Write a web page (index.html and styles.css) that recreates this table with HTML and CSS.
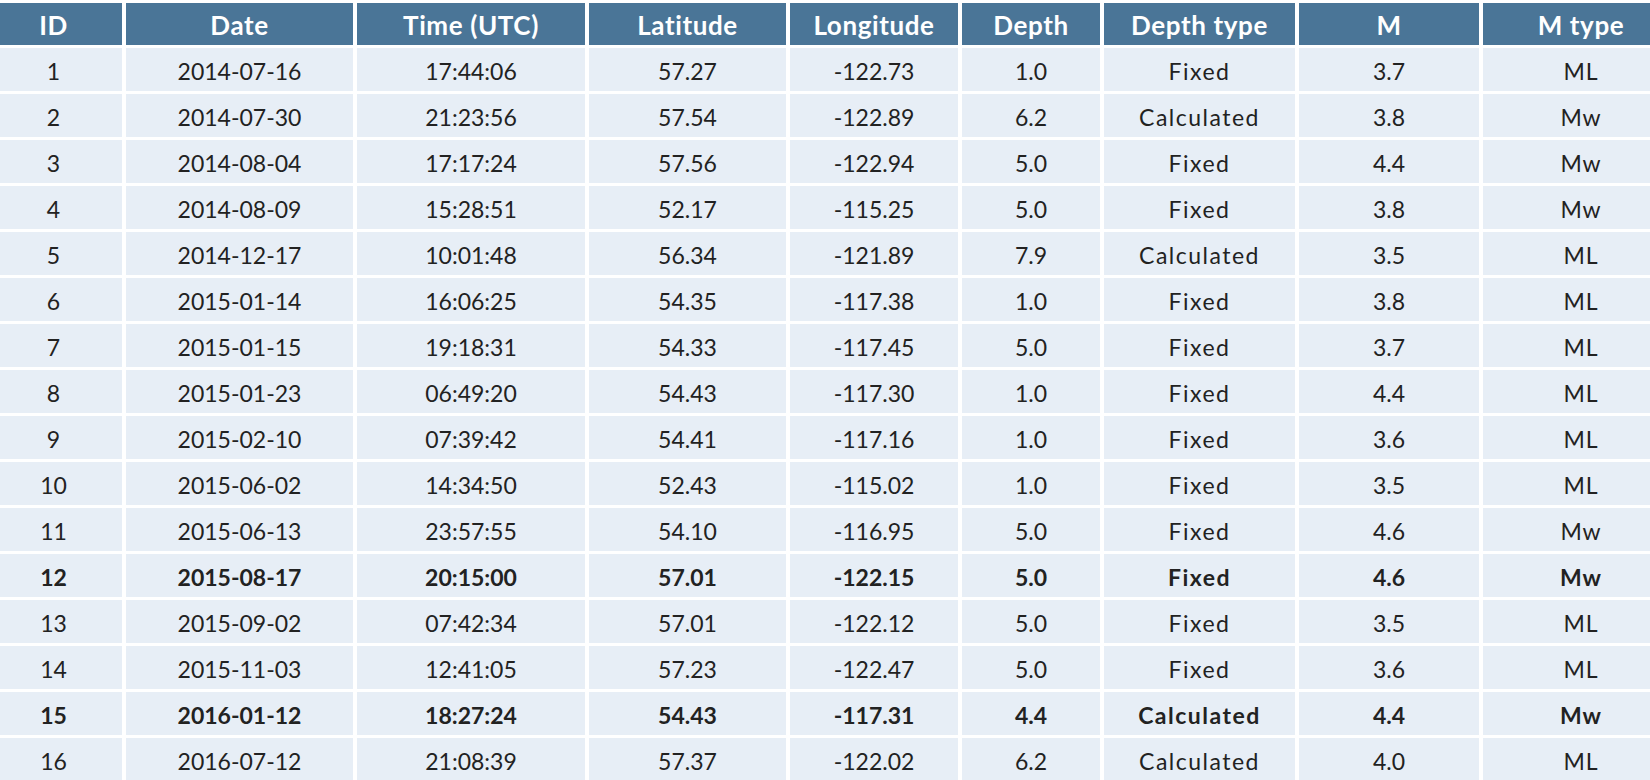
FILE: index.html
```html
<!DOCTYPE html>
<html>
<head>
<meta charset="utf-8">
<link rel="stylesheet" href="styles.css">
</head>
<body>
<table class="quakes">
<colgroup>
<col class="c-id"><col class="c-date"><col class="c-time"><col class="c-lat"><col class="c-lon"><col class="c-depth"><col class="c-dtype"><col class="c-m"><col class="c-mtype">
</colgroup>
<thead>
<tr><th>ID</th><th>Date</th><th>Time (UTC)</th><th>Latitude</th><th>Longitude</th><th>Depth</th><th>Depth type</th><th>M</th><th>M type</th></tr>
</thead>
<tbody>
<tr><td>1</td><td>2014-07-16</td><td>17:44:06</td><td>57.27</td><td>-122.73</td><td>1.0</td><td class="word">Fixed</td><td>3.7</td><td class="mt">ML</td></tr>
<tr><td>2</td><td>2014-07-30</td><td>21:23:56</td><td>57.54</td><td>-122.89</td><td>6.2</td><td class="word">Calculated</td><td>3.8</td><td class="mt">Mw</td></tr>
<tr><td>3</td><td>2014-08-04</td><td>17:17:24</td><td>57.56</td><td>-122.94</td><td>5.0</td><td class="word">Fixed</td><td>4.4</td><td class="mt">Mw</td></tr>
<tr><td>4</td><td>2014-08-09</td><td>15:28:51</td><td>52.17</td><td>-115.25</td><td>5.0</td><td class="word">Fixed</td><td>3.8</td><td class="mt">Mw</td></tr>
<tr><td>5</td><td>2014-12-17</td><td>10:01:48</td><td>56.34</td><td>-121.89</td><td>7.9</td><td class="word">Calculated</td><td>3.5</td><td class="mt">ML</td></tr>
<tr><td>6</td><td>2015-01-14</td><td>16:06:25</td><td>54.35</td><td>-117.38</td><td>1.0</td><td class="word">Fixed</td><td>3.8</td><td class="mt">ML</td></tr>
<tr><td>7</td><td>2015-01-15</td><td>19:18:31</td><td>54.33</td><td>-117.45</td><td>5.0</td><td class="word">Fixed</td><td>3.7</td><td class="mt">ML</td></tr>
<tr><td>8</td><td>2015-01-23</td><td>06:49:20</td><td>54.43</td><td>-117.30</td><td>1.0</td><td class="word">Fixed</td><td>4.4</td><td class="mt">ML</td></tr>
<tr><td>9</td><td>2015-02-10</td><td>07:39:42</td><td>54.41</td><td>-117.16</td><td>1.0</td><td class="word">Fixed</td><td>3.6</td><td class="mt">ML</td></tr>
<tr><td>10</td><td>2015-06-02</td><td>14:34:50</td><td>52.43</td><td>-115.02</td><td>1.0</td><td class="word">Fixed</td><td>3.5</td><td class="mt">ML</td></tr>
<tr><td>11</td><td>2015-06-13</td><td>23:57:55</td><td>54.10</td><td>-116.95</td><td>5.0</td><td class="word">Fixed</td><td>4.6</td><td class="mt">Mw</td></tr>
<tr class="hl"><td>12</td><td>2015-08-17</td><td>20:15:00</td><td>57.01</td><td>-122.15</td><td>5.0</td><td class="word">Fixed</td><td>4.6</td><td class="mt">Mw</td></tr>
<tr><td>13</td><td>2015-09-02</td><td>07:42:34</td><td>57.01</td><td>-122.12</td><td>5.0</td><td class="word">Fixed</td><td>3.5</td><td class="mt">ML</td></tr>
<tr><td>14</td><td>2015-11-03</td><td>12:41:05</td><td>57.23</td><td>-122.47</td><td>5.0</td><td class="word">Fixed</td><td>3.6</td><td class="mt">ML</td></tr>
<tr class="hl"><td>15</td><td>2016-01-12</td><td>18:27:24</td><td>54.43</td><td>-117.31</td><td>4.4</td><td class="word">Calculated</td><td>4.4</td><td class="mt">Mw</td></tr>
<tr><td>16</td><td>2016-07-12</td><td>21:08:39</td><td>57.37</td><td>-122.02</td><td>6.2</td><td class="word">Calculated</td><td>4.0</td><td class="mt">ML</td></tr>
</tbody>
</table>
</body>
</html>
```

FILE: styles.css
```css
html, body {
  margin: 0;
  padding: 0;
  background: #ffffff;
  overflow: hidden;
}
body {
  font-family: Lato, "Noto Sans", sans-serif;
  color: #222;
}
.quakes {
  border-collapse: separate;
  border-spacing: 4px 3px;
  margin: 0 0 0 -19px;
  table-layout: fixed;
  width: 1702px;
}
.c-id { width: 137px; }
.c-date { width: 227px; }
.c-time { width: 228px; }
.c-lat { width: 197px; }
.c-lon { width: 168px; }
.c-depth { width: 138px; }
.c-dtype { width: 191px; }
.c-m { width: 180px; }
.c-mtype { width: 196px; }
.quakes th, .quakes td {
  padding: 0;
  text-align: center;
  white-space: nowrap;
}
.quakes th {
  height: 42px;
  background: #4a7597;
  color: #fff;
  font-weight: 700;
  font-size: 26px;
  letter-spacing: 0.6px;
  padding-top: 2px;
  box-sizing: border-box;
}
.quakes td {
  height: 43px;
  background: #e7eef6;
  font-size: 23px;
  padding-top: 3px;
  box-sizing: border-box;
}
.quakes td.word {
  letter-spacing: 1.5px;
}
.quakes td.mt {
  letter-spacing: 1px;
}
.quakes tr.hl td {
  font-weight: 700;
}
```
